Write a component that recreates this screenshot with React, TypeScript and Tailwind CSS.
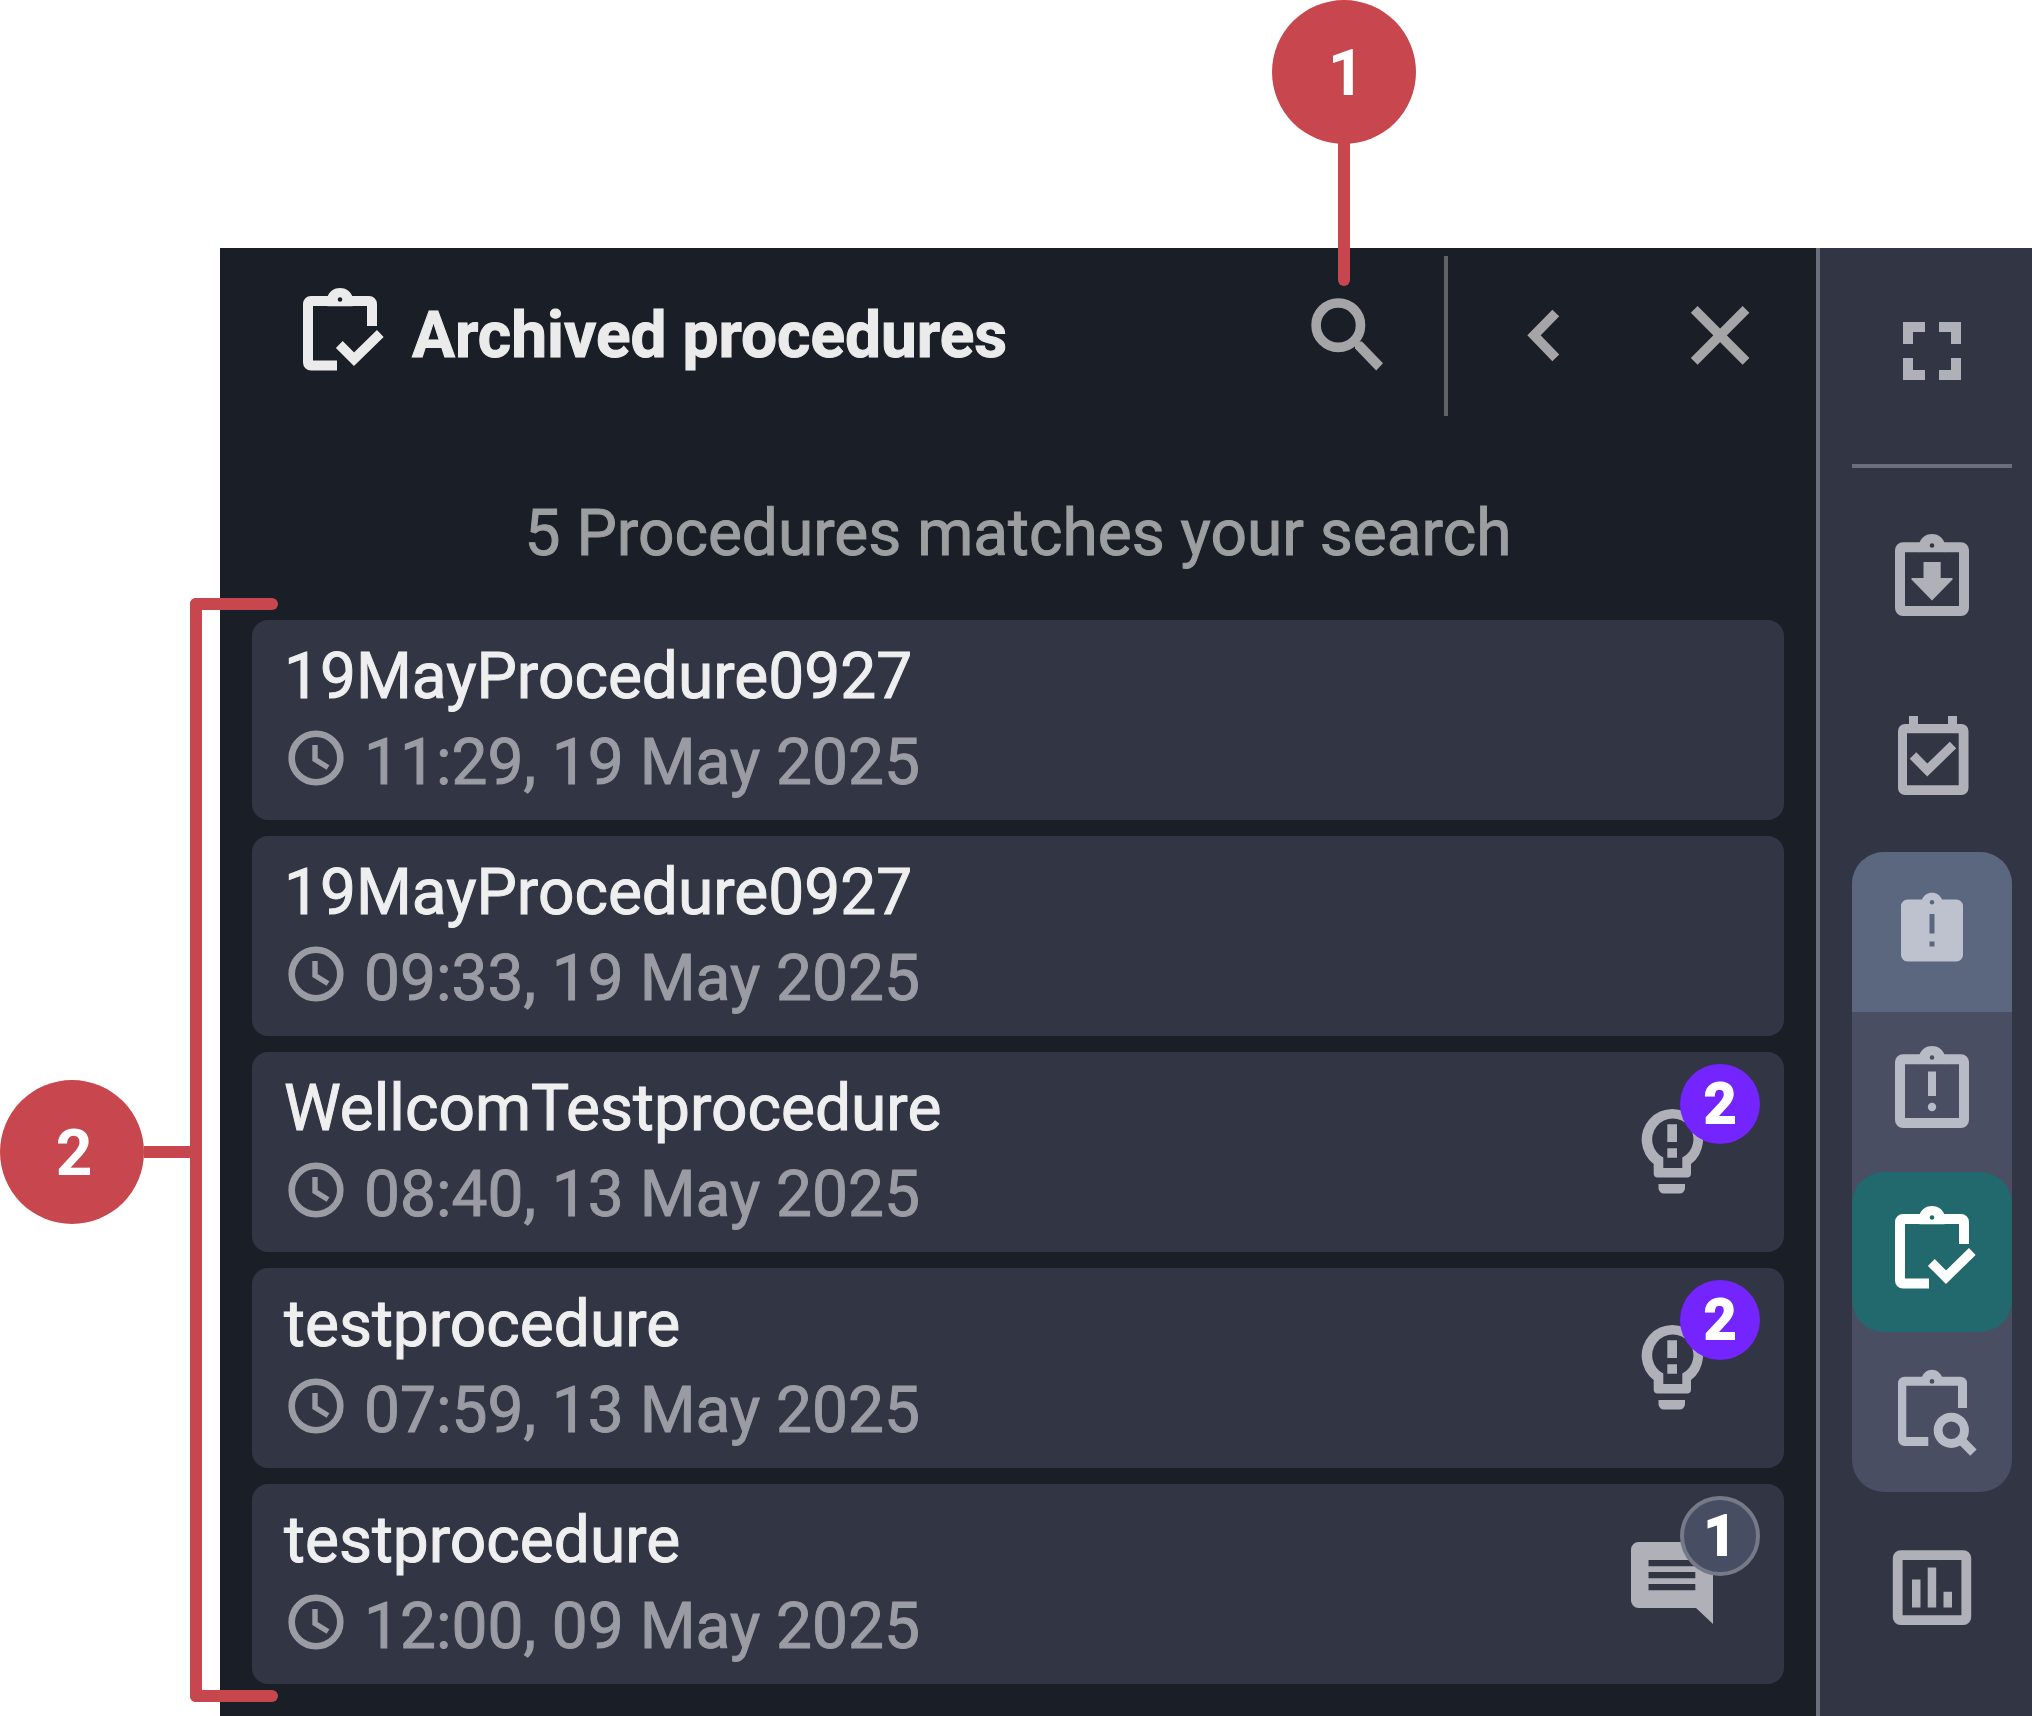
import type { ReactNode } from 'react';

const procedures = [
  { name: '19MayProcedure0927', time: '11:29, 19 May 2025' },
  { name: '19MayProcedure0927', time: '09:33, 19 May 2025' },
  { name: 'WellcomTestprocedure', time: '08:40, 13 May 2025', tips: 2 },
  { name: 'testprocedure', time: '07:59, 13 May 2025', tips: 2 },
  { name: 'testprocedure', time: '12:00, 09 May 2025', comments: 1 },
];

export default function App() {
  return (
    <div className="bg-white pt-[248px] pl-[220px] font-[Roboto,sans-serif] text-[64px]">
      <div className="flex">
        <ArchivedPanel />
        <Sidebar />
      </div>
    </div>
  );
}

function ArchivedPanel() {
  return (
    <main className="flex-1 min-w-0 bg-[#1a1e26] pt-2 pb-8 [-webkit-text-stroke:1px]">
      {/* Header */}
      <header className="flex items-center h-40 pl-[72px] pr-4 gap-4 text-[#a5a5a7]">
        <div className="flex items-center gap-6 flex-1 text-[#ebebeb]">
          <ClipboardCheckIcon className="mb-1" />
          <h1 className="font-bold leading-[84px] whitespace-nowrap">Archived procedures</h1>
        </div>
        <div className="relative">
          <HeaderButton label="Search"><SearchIcon /></HeaderButton>
          {/* Callout 1 */}
          <div className="absolute bottom-[130px] right-3 flex flex-col items-center">
            <Callout>1</Callout>
            <div className="-mt-1 w-3 h-[146px] rounded-b-full bg-[#c8474e]"></div>
          </div>
        </div>
        <div className="w-1 h-full bg-[#606266]"></div>
        <div className="flex gap-4">
          <HeaderButton label="Back"><ChevronIcon /></HeaderButton>
          <HeaderButton label="Close"><CloseIcon /></HeaderButton>
        </div>
      </header>

      <p className="mt-[76px] mb-11 px-8 text-center leading-[84px] text-[#9d9ea0]">5 Procedures matches your search</p>

      <div className="relative mx-8">
        {/* Callout 2 with bracket */}
        <div className="absolute inset-y-0 right-full flex items-center -mr-5">
          <Callout>2</Callout>
          <div className="w-[46px] h-3 bg-[#c8474e]"></div>
          <div className="relative w-[82px] self-stretch">
            <div className="absolute -top-[22px] -bottom-[18px] left-0 w-3 rounded-l-md bg-[#c8474e]"></div>
            <div className="absolute -top-[22px] left-0 right-[-6px] h-3 rounded-tl-md rounded-r-md bg-[#c8474e]"></div>
            <div className="absolute -bottom-[18px] left-0 right-[-6px] h-3 rounded-bl-md rounded-r-md bg-[#c8474e]"></div>
          </div>
        </div>

        <ul className="flex flex-col gap-4">
          {procedures.map((procedure, index) => (
            <ProcedureCard key={index} {...procedure} />
          ))}
        </ul>
      </div>
    </main>
  );
}

function ProcedureCard({ name, time, tips, comments }: any) {
  return (
    <li className="relative flex items-center justify-between h-[200px] rounded-2xl bg-[#323544] pl-8 pr-16 text-[#b0b0b8]">
      <div>
        <h2 className="leading-[86px] text-[#efeff0]">{name}</h2>
        <div className="flex items-center gap-4 leading-[86px] text-[#9b9ba4]">
          <ClockIcon className="mb-2.5" />
          <span>{time}</span>
        </div>
      </div>
      {tips && <BulbIcon />}
      {comments && <CommentIcon />}
      {tips && <Badge className="bg-[#7324ff]">{tips}</Badge>}
      {comments && <Badge className="bg-[#474e63] border-4 border-[#757a89]">{comments}</Badge>}
    </li>
  );
}

function Badge({ className, children }: any) {
  return (
    <span className={`absolute top-3 right-6 w-20 h-20 flex items-center justify-center rounded-full text-[56px] font-bold text-white [-webkit-text-stroke:2px] ${className}`}>
      {children}
    </span>
  );
}

function Sidebar() {
  return (
    <aside className="shrink-0 bg-[#323544] border-l-4 border-[#6c6f7b] pt-6 pl-8 pr-5 text-[#b0b0b8]">
      <nav className="flex flex-col">
        <SideButton label="Full screen"><FullscreenIcon /></SideButton>
        <div className="my-8 h-1 bg-[#6c6f7b]"></div>
        <SideButton label="Received"><ClipboardDownIcon /></SideButton>
        <SideButton label="Planned" className="my-4"><CalendarIcon /></SideButton>
        <div className="rounded-[32px] overflow-hidden bg-[#494e63] text-[#b8bbc5]">
          <SideButton label="Procedures" className="bg-[#5b667f] text-[#bec2cf]"><ClipboardAlertFilledIcon /></SideButton>
          <SideButton label="Ongoing procedures"><ClipboardAlertIcon /></SideButton>
          <SideButton label="Archived procedures" className="rounded-[32px] bg-[#22696e] text-white"><ClipboardCheckIcon /></SideButton>
          <SideButton label="Find procedures"><ClipboardSearchIcon /></SideButton>
        </div>
        <SideButton label="Reports" className="mt-4"><ChartIcon /></SideButton>
      </nav>
    </aside>
  );
}

function SideButton({ label, className = '', children }: any) {
  return (
    <button aria-label={label} className={`w-40 h-40 flex items-center justify-center cursor-pointer ${className}`}>
      {children}
    </button>
  );
}

function HeaderButton({ label, children }: any) {
  return (
    <button aria-label={label} className="w-40 h-40 flex items-center justify-center cursor-pointer">
      {children}
    </button>
  );
}

function Callout({ children }: any) {
  return (
    <div className="w-36 h-36 shrink-0 flex items-center justify-center rounded-full bg-[#c8474e] pt-1 pl-1 font-bold text-white [-webkit-text-stroke:0px]">
      {children}
    </div>
  );
}

function Icon({ className = '', children }: { className?: string; children: ReactNode }) {
  return (
    <svg viewBox="0 0 96 96" fill="currentColor" className={`w-24 h-24 shrink-0 ${className}`}>
      {children}
    </svg>
  );
}

function SearchIcon() {
  return (
    <Icon>
      <circle cx="38.3" cy="37.2" r="22.2" fill="none" stroke="currentColor" strokeWidth="9.6" />
      <path d="M55 60.5 L55 57 L58 53.5 L62 53.5 L83 75.3 L76.2 82.4 Z" />
    </Icon>
  );
}

function ChevronIcon() {
  return (
    <Icon>
      <path d="M59.8 25 L38 47.3 L59.8 69.8" fill="none" stroke="currentColor" strokeWidth="9.6" />
    </Icon>
  );
}

function CloseIcon() {
  return (
    <Icon>
      <path d="M22.2 21.3 L74 73.3 M74 21.3 L22.2 73.3" fill="none" stroke="currentColor" strokeWidth="9.6" />
    </Icon>
  );
}

function ClockIcon({ className = '' }) {
  return (
    <svg viewBox="0 0 64 64" fill="none" stroke="currentColor" className={`w-16 h-16 shrink-0 ${className}`}>
      <circle cx="32" cy="32" r="24.3" strokeWidth="6.6" />
      <path d="M31 19 V33.5 L44 41.5" strokeWidth="5.4" />
    </svg>
  );
}

function FullscreenIcon() {
  return (
    <Icon>
      <path d="M19 18 H41 V28 H29 V40 H19 Z M55 18 H77 V40 H67 V28 H55 Z M19 54 H29 V66 H41 V76 H19 Z M67 54 H77 V76 H55 V66 H67 Z" />
    </Icon>
  );
}

// Clip at the top of the outlined boards, with its hole left open
function Clip() {
  return (
    <path
      fillRule="evenodd"
      d="M35.5 10.5 C37.5 5.3 42.3 2 48 2 C53.7 2 58.5 5.3 60.5 10.5 V20.2 H35.5 Z M48 11.2 a2.3 2.3 0 1 0 0 4.6 a2.3 2.3 0 1 0 0 -4.6 Z"
    />
  );
}

function Board() {
  return (
    <>
      <path d="M36 10.2 V20.2 H21 V74 H75 V20.2 H60 V10.2 H77 A8 8 0 0 1 85 18.2 V76 A8 8 0 0 1 77 84 H19 A8 8 0 0 1 11 76 V18.2 A8 8 0 0 1 19 10.2 Z" />
      <Clip />
    </>
  );
}

function ClipboardDownIcon() {
  return (
    <Icon>
      <Board />
      <path d="M39.5 30 H56.7 V46 H68.5 V47.5 L48 68.5 L27.5 47.5 V46 H39.5 Z" />
    </Icon>
  );
}

function ClipboardAlertIcon() {
  return (
    <Icon>
      <Board />
      <path d="M44 27.5 H52 V52 H44 Z" />
      <circle cx="48" cy="63" r="4.2" />
    </Icon>
  );
}

function ClipboardAlertFilledIcon() {
  return (
    <Icon>
      <path
        fillRule="evenodd"
        d="M23.5 15.5 H38 C39.8 11.4 43.5 8.7 48 8.7 C52.5 8.7 56.2 11.4 58 15.5 H72.5 A6.5 6.5 0 0 1 79 22 V71 A6.5 6.5 0 0 1 72.5 77.5 H23.5 A6.5 6.5 0 0 1 17 71 V22 A6.5 6.5 0 0 1 23.5 15.5 Z M48 16 a2.3 2.3 0 1 0 0 4.6 a2.3 2.3 0 1 0 0 -4.6 Z M45.5 30 V49.5 H50.5 V30 Z M45.5 57.5 V62.5 H50.5 V57.5 Z"
      />
    </Icon>
  );
}

function ClipboardCheckIcon({ className = '' }) {
  return (
    <Icon className={className}>
      <path d="M19 10 H36.5 V20 H21 V74.5 H45 V84.5 H19 A8 8 0 0 1 11 76.5 V18 A8 8 0 0 1 19 10 Z" />
      <path d="M59.5 10 H77 A8 8 0 0 1 85 18 V40 H75 V20 H59.5 Z" />
      <Clip />
      <path d="M47.3 58.5 L62 73.2 L88.3 47.5" fill="none" stroke="currentColor" strokeWidth="9.6" />
    </Icon>
  );
}

function ClipboardSearchIcon() {
  return (
    <Icon>
      <path
        fillRule="evenodd"
        d="M20.5 12.7 H38 C39.8 8.5 43.5 5.7 48 5.7 C52.5 5.7 56.2 8.5 58 12.7 H76.5 A6.5 6.5 0 0 1 83 19.2 V44 H74 V21.7 H22.3 V73 H44.3 V82 H20.5 A6.5 6.5 0 0 1 14 75.5 V19.2 A6.5 6.5 0 0 1 20.5 12.7 Z M48 15 a2.4 2.4 0 1 0 0 4.8 a2.4 2.4 0 1 0 0 -4.8 Z"
      />
      <circle cx="67.3" cy="66.3" r="13.2" fill="none" stroke="currentColor" strokeWidth="8.8" />
      <path d="M77 76 L89.4 88.6" stroke="currentColor" strokeWidth="9" />
    </Icon>
  );
}

function CalendarIcon() {
  return (
    <Icon>
      <path
        fillRule="evenodd"
        d="M25 8 H34 V16 H64 V8 H73 V16 H77.5 A7 7 0 0 1 84.5 23 V80 A7 7 0 0 1 77.5 87 H21 A7 7 0 0 1 14 80 V23 A7 7 0 0 1 21 16 H25 Z M23 25.3 V77.3 H74.7 V25.3 Z"
      />
      <path d="M29 47.5 L43.3 62 L69 37" fill="none" stroke="currentColor" strokeWidth="9.2" />
    </Icon>
  );
}

function ChartIcon() {
  return (
    <Icon>
      <rect x="13.7" y="15.2" width="68.6" height="65" rx="3" fill="none" stroke="currentColor" strokeWidth="9.8" />
      <path d="M28 39.5 H36.5 V67.5 H28 Z M43.7 27.5 H52.2 V67.5 H43.7 Z M59.5 51.7 H68 V67.5 H59.5 Z" />
    </Icon>
  );
}

function BulbIcon() {
  return (
    <Icon>
      <path
        fillRule="evenodd"
        d="M29.7 60 A30.7 30.7 0 1 1 67 60 V69.5 A4 4 0 0 1 63 73.5 H33.7 A4 4 0 0 1 29.7 69.5 Z M39.3 64 H58.3 V53.5 A20.6 20.6 0 1 0 39.3 53.5 Z"
      />
      <path d="M43.3 20.3 H53 V38 H43.3 Z M43.3 44.3 H53 V53.7 H43.3 Z" />
      <path d="M34.5 80 H61 V84 A5.5 5.5 0 0 1 55.5 89.5 H40 A5.5 5.5 0 0 1 34.5 84 Z" />
    </Icon>
  );
}

function CommentIcon() {
  return (
    <Icon>
      <path
        fillRule="evenodd"
        d="M14.5 6 H81.5 A8 8 0 0 1 89 14 V88 L72 72 H14.5 A7.5 7.5 0 0 1 7 64.5 V13.5 A7.5 7.5 0 0 1 14.5 6 Z M24.5 24 V30.3 H71.3 V24 Z M24.5 36 V42.3 H71.3 V36 Z M24.5 48 V54.3 H71.3 V48 Z"
      />
    </Icon>
  );
}
